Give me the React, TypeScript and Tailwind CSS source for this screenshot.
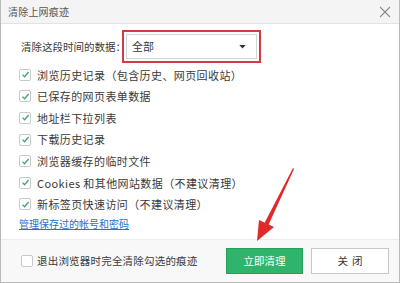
import React from "react";

const font = { fontFamily: '"Noto Sans CJK SC", "Noto Sans", sans-serif' };

const items = [
  "浏览历史记录（包含历史、网页回收站）",
  "已保存的网页表单数据",
  "地址栏下拉列表",
  "下载历史记录",
  "浏览器缓存的临时文件",
  "Cookies 和其他网站数据（不建议清理）",
  "新标签页快速访问（不建议清理）",
];

function Check({ checked }: { checked: boolean }) {
  return (
    <span className="w-[12px] h-[12px] border border-[#c9c9c9] bg-white rounded-[2px] flex items-center justify-center shrink-0">
      {checked && (
        <svg width="9" height="9" viewBox="0 0 9 9">
          <path d="M1.5 4.6 L3.6 6.7 L7.6 2" fill="none" stroke="#3aa76d" strokeWidth="1.3" />
        </svg>
      )}
    </span>
  );
}

export default function App() {
  return (
    <div className="relative w-[400px] h-[283px] bg-white overflow-hidden text-[#3a3a3a]" style={font}>
      <div className="h-full border-x border-b border-[#b9b9b9] flex flex-col">
        {/* Title bar */}
        <div className="h-[24px] bg-[#f4f4f4] border-b border-[#e2e2e2] flex items-center justify-between pl-[7px] pr-[8px] shrink-0">
          <span className="text-[10px] text-[#555] tracking-[0.2px]">清除上网痕迹</span>
          <svg width="12" height="12" viewBox="0 0 12 12">
            <path d="M1 1 L11 11 M11 1 L1 11" stroke="#8a8a8a" strokeWidth="1.1" />
          </svg>
        </div>

        {/* Body */}
        <div className="flex-1 flex flex-col pl-[18px]">
          <div className="flex items-center h-[33px] mt-[6px]">
            <span className="text-[10.5px] pl-[2px] w-[103px] whitespace-nowrap">清除这段时间的数据：</span>
            <div className="border-2 border-[#d33a44] p-[2px] w-[139px] h-[33px]">
              <div className="h-full border border-[#d4d4d4] bg-white flex items-center justify-between pl-[5px] pr-[10px]">
                <span className="text-[11px]">全部</span>
                <svg width="7" height="4" viewBox="0 0 8 5">
                  <path d="M0 0 L8 0 L4 4.5 Z" fill="#333" />
                </svg>
              </div>
            </div>
          </div>

          <div className="flex flex-col mt-[1px]">
            {items.map((t) => (
              <div key={t} className="flex items-center gap-[6px] h-[21.6px]">
                <Check checked />
                <span className="text-[11px] tracking-[0.4px] whitespace-nowrap">{t}</span>
              </div>
            ))}
          </div>

          <div className="mt-[1px] text-[10px] text-[#2a6fc9] underline decoration-[#2a6fc9]">管理保存过的帐号和密码</div>
        </div>

        {/* Footer */}
        <div className="h-[43px] bg-[#f8f8f8] border-t border-[#ececec] flex items-center pl-[20px] pr-[10px] shrink-0">
          <Check checked={false} />
          <span className="ml-[4px] text-[10.5px] tracking-[0.2px] flex-1 whitespace-nowrap">退出浏览器时完全清除勾选的痕迹</span>
          <button className="w-[77px] h-[26px] bg-[#2fb46b] border border-[#27a05d] text-white text-[10.5px] mr-[8px]">立即清理</button>
          <button className="w-[78px] h-[26px] bg-white border border-[#c7c7c7] text-[#333] text-[10.5px] tracking-[4px] pl-[4px]">关闭</button>
        </div>
      </div>

      {/* Red annotation arrow */}
      <svg className="absolute left-[250px] top-[165px] pointer-events-none" width="50" height="80" viewBox="0 0 50 80">
        <path d="M43 3 L44 4 L18 61 L14 59 Z" fill="#e02a2a" />
        <path d="M7 76 L9 55 L24 62 Z" fill="#e02a2a" />
      </svg>
    </div>
  );
}
